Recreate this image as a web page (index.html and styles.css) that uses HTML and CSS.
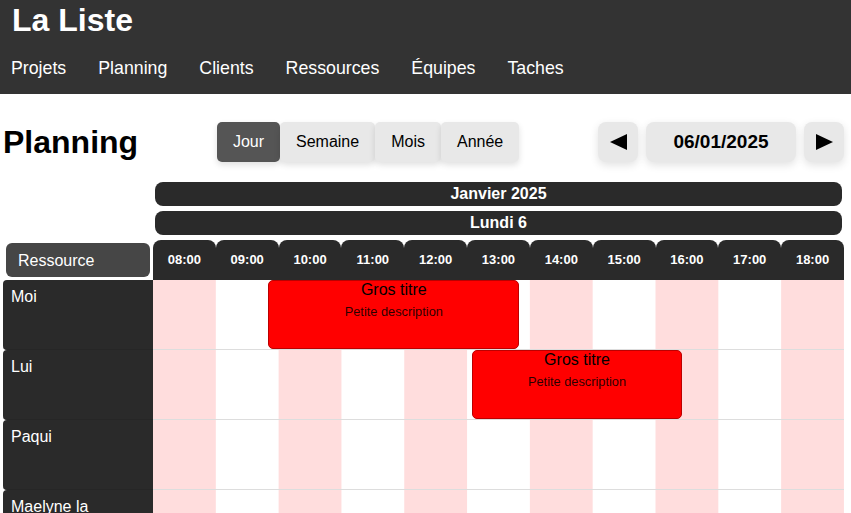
FILE: index.html
```html
<!DOCTYPE html>
<html lang="fr">
<head>
<meta charset="utf-8">
<title>La Liste - Planning</title>
<link rel="stylesheet" href="styles.css">
</head>
<body>
<header class="site-header">
  <h1 class="brand">La Liste</h1>
  <nav class="main-nav">
    <a href="#">Projets</a>
    <a href="#">Planning</a>
    <a href="#">Clients</a>
    <a href="#">Ressources</a>
    <a href="#">Équipes</a>
    <a href="#">Taches</a>
  </nav>
</header>
<main class="page">
  <div class="toolbar">
    <h2 class="page-title">Planning</h2>
    <div class="view-switch">
      <button class="view-btn active">Jour</button>
      <button class="view-btn">Semaine</button>
      <button class="view-btn">Mois</button>
      <button class="view-btn">Année</button>
    </div>
    <div class="date-nav">
      <button class="arrow-btn" aria-label="Précédent">
        <svg width="17" height="16" viewBox="0 0 17 16"><polygon points="17,0 17,16 0,8" fill="#000"/></svg>
      </button>
      <div class="date-box">06/01/2025</div>
      <button class="arrow-btn" aria-label="Suivant">
        <svg width="17" height="16" viewBox="0 0 17 16"><polygon points="0,0 0,16 17,8" fill="#000"/></svg>
      </button>
    </div>
  </div>

  <section class="timeline">
    <div class="head-row">
      <div class="spacer"></div>
      <div class="bar">Janvier 2025</div>
    </div>
    <div class="head-row">
      <div class="spacer"></div>
      <div class="bar">Lundi 6</div>
    </div>
    <div class="hour-row">
      <div class="res-col"><div class="res-head">Ressource</div></div>
      <div class="hours">
        <div class="hour">08:00</div>
        <div class="hour">09:00</div>
        <div class="hour">10:00</div>
        <div class="hour">11:00</div>
        <div class="hour">12:00</div>
        <div class="hour">13:00</div>
        <div class="hour">14:00</div>
        <div class="hour">15:00</div>
        <div class="hour">16:00</div>
        <div class="hour">17:00</div>
        <div class="hour">18:00</div>
      </div>
    </div>

    <div class="row">
      <div class="label">Moi</div>
      <div class="track">
        <div class="event" style="left:16.667%;width:36.364%">
          <div class="ev-title">Gros titre</div>
          <div class="ev-desc">Petite description</div>
        </div>
      </div>
    </div>
    <div class="row">
      <div class="label">Lui</div>
      <div class="track">
        <div class="event" style="left:46.212%;width:30.303%">
          <div class="ev-title">Gros titre</div>
          <div class="ev-desc">Petite description</div>
        </div>
      </div>
    </div>
    <div class="row">
      <div class="label">Paqui</div>
      <div class="track"></div>
    </div>
    <div class="row">
      <div class="label">Maelyne la magnifique</div>
      <div class="track"></div>
    </div>
  </section>
</main>
</body>
</html>
```
FILE: styles.css
```css
* { box-sizing: border-box; }

html, body {
  margin: 0;
  padding: 0;
  overflow: hidden;
}

body {
  font-family: "Liberation Sans", Arial, sans-serif;
  font-size: 16px;
  color: #000;
  background: #fff;
}

.site-header {
  background: #333333;
  color: #fff;
  height: 94px;
  padding: 1px 11px 0;
}

.brand {
  margin: 0 0 0 1px;
  font-size: 32px;
  line-height: 38px;
  font-weight: bold;
}

.main-nav {
  display: flex;
  gap: 32px;
  margin-top: 19px;
}

.main-nav a {
  color: #fff;
  text-decoration: none;
  font-size: 17.75px;
  line-height: 21px;
}

.page {
  padding: 28px 7px 0 3px;
}

.toolbar {
  display: flex;
  justify-content: space-between;
  align-items: center;
  height: 40px;
  margin-bottom: 20px;
}

.page-title {
  margin: 0;
  font-size: 32px;
  font-weight: bold;
  line-height: 40px;
}

.view-switch {
  display: flex;
}

.view-btn {
  font-family: inherit;
  font-size: 16px;
  height: 40px;
  padding: 0 16px;
  border: none;
  border-radius: 5px;
  background: #e8e8e8;
  color: #000;
  box-shadow: 0 3px 6px rgba(0, 0, 0, 0.12);
}

.view-btn.active {
  background: #555555;
  color: #fff;
}

.date-nav {
  display: flex;
  align-items: center;
  gap: 8px;
}

.arrow-btn {
  width: 40px;
  height: 40px;
  padding: 0;
  border: none;
  border-radius: 8px;
  background: #e8e8e8;
  display: flex;
  align-items: center;
  justify-content: center;
  box-shadow: 0 3px 8px rgba(0, 0, 0, 0.12);
}

.date-box {
  width: 150px;
  height: 40px;
  border-radius: 8px;
  background: #e8e8e8;
  font-size: 19px;
  font-weight: bold;
  display: flex;
  align-items: center;
  justify-content: center;
  box-shadow: 0 3px 8px rgba(0, 0, 0, 0.12);
}

.timeline {
  display: flex;
  flex-direction: column;
}

.head-row {
  display: flex;
  margin-bottom: 5px;
}

.spacer {
  width: 150px;
  flex: none;
}

.bar {
  flex: 1;
  margin: 0 2px;
  height: 24px;
  background: #2a2a2a;
  color: #fff;
  border-radius: 8px;
  font-weight: bold;
  font-size: 16px;
  display: flex;
  align-items: center;
  justify-content: center;
}

.hour-row {
  display: flex;
  height: 40px;
}

.res-col {
  width: 150px;
  flex: none;
  padding: 3px;
}

.res-head {
  height: 34px;
  background: #464646;
  color: #fff;
  border-radius: 6px;
  padding: 2px 0 0 12px;
  display: flex;
  align-items: center;
  font-size: 16px;
}

.hours {
  flex: 1;
  display: flex;
}

.hour {
  flex: 1;
  background: #2a2a2a;
  color: #fff;
  border-radius: 8px 8px 0 0;
  font-weight: bold;
  font-size: 13px;
  padding-bottom: 1px;
  display: flex;
  align-items: center;
  justify-content: center;
}

.row {
  display: flex;
  height: 70px;
}

.label {
  width: 150px;
  flex: none;
  background: #2a2a2a;
  color: #fff;
  padding: 8px 8px 0;
  font-size: 16px;
  line-height: 18px;
  border-radius: 4px 0 0 4px;
  border-bottom: 1px solid #262626;
}

.track {
  flex: 1;
  position: relative;
  border-bottom: 1px solid #dddddd;
  background-image: linear-gradient(to right, #ffdddd 50%, #ffffff 50%);
  background-size: calc(200% / 11) 100%;
}

.event {
  position: absolute;
  top: 0;
  bottom: 0;
  background: #ff0000;
  border: 1px solid #bb0000;
  border-radius: 5px;
  text-align: center;
  color: #000;
}

.ev-title {
  font-size: 16px;
  line-height: 18px;
}

.ev-desc {
  font-size: 12.8px;
  line-height: 15px;
  margin-top: 5px;
  color: rgba(0, 0, 0, 0.85);
}
```
